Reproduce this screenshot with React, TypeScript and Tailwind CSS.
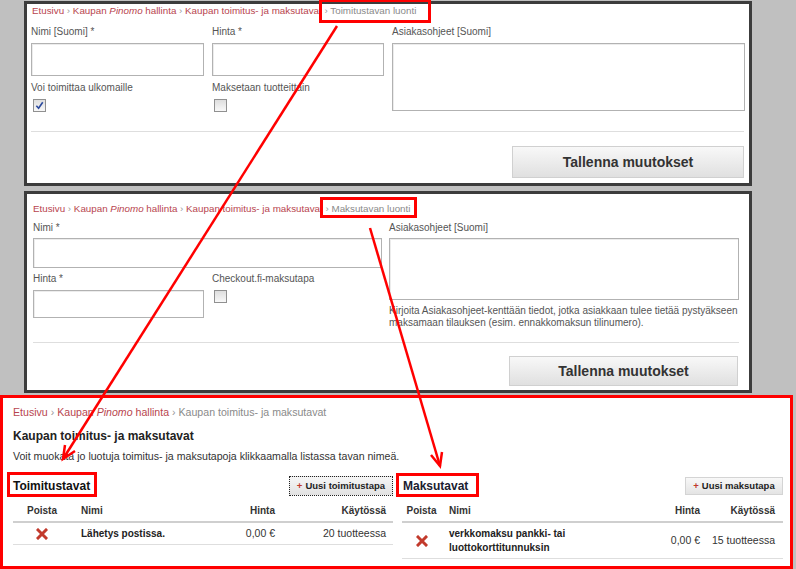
/**
 * Toimitus- ja maksutavat – annotated admin screenshot
 */

function Breadcrumb({ current, className }: { current?: string; className: string }) {
  return (
    <div className={className}>
      <span className="text-[#b8454e]">Etusivu</span>
      <span className="text-[#999]"> › </span>
      <span className="text-[#b8454e]">
        Kaupan <i>Pinomo</i> hallinta
      </span>
      <span className="text-[#999]"> › </span>
      <span className={current ? 'text-[#b8454e]' : 'text-[#8a8a8a]'}>Kaupan toimitus- ja maksutavat</span>
      {current && (
        <>
          <span className="text-[#999]"> › </span>
          <span className="text-[#8a8a8a]">{current}</span>
        </>
      )}
    </div>
  )
}

function Label({ children, className = '' }: { children: React.ReactNode; className?: string }) {
  return <div className={`h-[12px] whitespace-nowrap text-[10px] leading-[12px] text-[#555] ${className}`}>{children}</div>
}

function Checkbox({ checked }: { checked?: boolean }) {
  return (
    <span className="flex h-[13px] w-[13px] items-center justify-center border border-[#909090] bg-linear-to-b from-[#dedede] to-[#f8f8f8]">
      {checked && (
        <svg viewBox="0 0 10 10" className="h-[9px] w-[9px]">
          <path d="M1.5 5.2 L4 8 L8.6 1.4" fill="none" stroke="#2b4a9e" strokeWidth="1.8" />
        </svg>
      )}
    </span>
  )
}

function DeleteIcon() {
  return (
    <svg viewBox="0 0 12 12" className="h-[12px] w-[12px]">
      <path d="M2 2 L10 10 M10 2 L2 10" stroke="#c23a2c" strokeWidth="3" strokeLinecap="square" />
    </svg>
  )
}

const inputCls = 'block w-full border border-[#b2b2b2] bg-white shadow-[inset_1px_1px_0_#ececec]'

function Annotations() {
  return (
    <svg className="pointer-events-none absolute left-0 top-0" width="796" height="569" viewBox="0 0 796 569">
      <g fill="none" stroke="#ff0000" strokeWidth="3">
        <rect x="320.5" y="0.5" width="109" height="21" />
        <rect x="321.5" y="198.5" width="94" height="18" />
        <rect x="8.5" y="473.5" width="87" height="22" />
        <rect x="397.5" y="474.5" width="80" height="21" />
      </g>
      <g fill="none" stroke="#ff0000" strokeWidth="2.5">
        <line x1="337" y1="26" x2="63" y2="459" />
        <polyline points="65,445 63,459 75,451" />
        <line x1="370" y1="228" x2="440" y2="466" />
        <polyline points="431,455 440,466 442,452" />
      </g>
    </svg>
  )
}

export default function App() {
  return (
    <div className="relative h-[569px] w-[796px] overflow-hidden bg-[#c0c0c0] font-['Liberation_Sans',Arial,sans-serif]">
      {/* Toimitustavan luonti */}
      <div className="ml-[24px] mt-[1px] h-[185px] w-[728px] border-[3px] border-[#3c3c3c] bg-white px-[4px]">
        <Breadcrumb
          current="Toimitustavan luonti"
          className="h-[14px] whitespace-nowrap pl-[1px] text-[9.8px] leading-[14px]"
        />
        <div className="mt-[8px] flex gap-[8px]">
          <div className="w-[173px]">
            <Label>Nimi [Suomi] *</Label>
            <input readOnly className={`mt-[5px] h-[33px] ${inputCls}`} />
            <Label className="mt-[6px]">Voi toimittaa ulkomaille</Label>
            <div className="mt-[5px] pl-[2px]">
              <Checkbox checked />
            </div>
          </div>
          <div className="w-[172px]">
            <Label>Hinta *</Label>
            <input readOnly className={`mt-[5px] h-[33px] ${inputCls}`} />
            <Label className="mt-[6px]">Maksetaan tuotteittain</Label>
            <div className="mt-[5px] pl-[2px]">
              <Checkbox />
            </div>
          </div>
          <div className="w-[353px]">
            <Label>Asiakasohjeet [Suomi]</Label>
            <textarea readOnly className={`mt-[5px] h-[68px] resize-none ${inputCls}`} />
          </div>
        </div>
        <div className="mt-[19px] h-px w-[713px] bg-[#dedede]" />
        <div className="mr-[1px] mt-[14px] flex justify-end">
          <button className="h-[32px] w-[232px] border border-[#d0d0d0] bg-linear-to-b from-[#f8f8f8] to-[#e0e0e0] text-[14px] font-bold text-[#333]">
            Tallenna muutokset
          </button>
        </div>
      </div>

      {/* Maksutavan luonti */}
      <div className="ml-[24px] mt-[5px] h-[202px] w-[728px] border-[3px] border-[#3c3c3c] bg-white pl-[6px] pr-[10px] pt-[8px]">
        <Breadcrumb current="Maksutavan luonti" className="h-[14px] whitespace-nowrap text-[9.8px] leading-[14px]" />
        <div className="mt-[6px] flex items-start gap-[7px]">
          <div className="w-[349px]">
            <Label>Nimi *</Label>
            <input readOnly className={`mt-[4px] h-[30px] ${inputCls}`} />
            <div className="mt-[5px] flex gap-[8px]">
              <div className="w-[171px]">
                <Label>Hinta *</Label>
                <input readOnly className={`mt-[5px] h-[28px] ${inputCls}`} />
              </div>
              <div>
                <Label>Checkout.fi-maksutapa</Label>
                <div className="mt-[5px] pl-[2px]">
                  <Checkbox />
                </div>
              </div>
            </div>
          </div>
          <div className="w-[350px]">
            <Label>Asiakasohjeet [Suomi]</Label>
            <textarea readOnly className={`mt-[4px] h-[62px] resize-none ${inputCls}`} />
            <p className="mt-[5px] text-[10px] leading-[12px] text-[#555]">
              Kirjoita Asiakasohjeet-kenttään tiedot, jotka asiakkaan tulee tietää pystyäkseen
              <br />
              maksamaan tilauksen (esim. ennakkomaksun tilinumero).
            </p>
          </div>
        </div>
        <div className="mt-[13px] h-px bg-[#dedede]" />
        <div className="mr-[1px] mt-[13px] flex justify-end">
          <button className="h-[30px] w-[229px] border border-[#d0d0d0] bg-linear-to-b from-[#f8f8f8] to-[#e0e0e0] text-[14px] font-bold text-[#333]">
            Tallenna muutokset
          </button>
        </div>
      </div>

      {/* Kaupan toimitus- ja maksutavat */}
      <div className="mt-[2px] h-[174px] w-[793px] border-[3px] border-[#ff0000] bg-white pl-[10px] pt-[7px]">
        <Breadcrumb className="h-[14px] whitespace-nowrap text-[10.6px] leading-[14px]" />
        <h1 className="mt-[9px] text-[12px] font-bold leading-[16px] text-[#222]">Kaupan toimitus- ja maksutavat</h1>
        <p className="mt-[5px] text-[10.6px] leading-[14px] text-[#333]">
          Voit muokata jo luotuja toimitus- ja maksutapoja klikkaamalla listassa tavan nimeä.
        </p>

        <div className="mt-[12px] flex gap-[9px]">
          {/* Toimitustavat */}
          <div className="w-[380px]">
            <div className="flex h-[22px] items-center justify-between">
              <h2 className="text-[12px] font-bold text-[#111]">Toimitustavat</h2>
              <button className="flex h-[20px] w-[104px] items-center justify-center gap-[3px] border border-dotted border-[#222] bg-linear-to-b from-[#f6f6f6] to-[#e2e2e2] text-[9.5px] font-bold text-[#222]">
                <span className="text-[#c0392b]">+</span>Uusi toimitustapa
              </button>
            </div>
            <div className="mt-[2px] grid h-[24px] grid-cols-[58px_150px_60px_112px] items-center border-b-2 border-[#cfcfcf] text-[10px] font-bold text-[#333]">
              <div className="text-center">Poista</div>
              <div className="pl-[10px]">Nimi</div>
              <div className="pr-[6px] text-right">Hinta</div>
              <div className="pr-[7px] text-right">Käytössä</div>
            </div>
            <div className="grid h-[22px] grid-cols-[58px_150px_60px_112px] items-center border-b border-[#dedede] text-[10.5px] text-[#333]">
              <div className="flex justify-center">
                <DeleteIcon />
              </div>
              <div className="pl-[10px] text-[10px] font-bold text-[#222]">Lähetys postissa.</div>
              <div className="pr-[6px] text-right">0,00 €</div>
              <div className="pr-[7px] text-right">20 tuotteessa</div>
            </div>
          </div>

          {/* Maksutavat */}
          <div className="w-[381px]">
            <div className="flex h-[22px] items-center justify-between">
              <h2 className="pl-[1px] text-[12px] font-bold text-[#1a2030]">Maksutavat</h2>
              <button className="flex h-[18px] w-[98px] items-center justify-center gap-[3px] border border-[#d4d4d4] bg-linear-to-b from-[#f8f8f8] to-[#e4e4e4] text-[9.5px] font-bold text-[#222]">
                <span className="text-[#c0392b]">+</span>Uusi maksutapa
              </button>
            </div>
            <div className="mt-[2px] grid h-[24px] grid-cols-[39px_205px_60px_77px] items-center border-b-2 border-[#cfcfcf] text-[10px] font-bold text-[#333]">
              <div className="text-center">Poista</div>
              <div className="pl-[8px]">Nimi</div>
              <div className="pr-[6px] text-right">Hinta</div>
              <div className="pr-[8px] text-right">Käytössä</div>
            </div>
            <div className="grid grid-cols-[39px_205px_60px_77px] items-center border-b border-[#dedede] pb-[3px] pt-[4px] text-[10.5px] text-[#333]">
              <div className="flex justify-center">
                <DeleteIcon />
              </div>
              <div className="w-[140px] pl-[8px] text-[10px] font-bold leading-[14px] text-[#222]">
                verkkomaksu pankki- tai luottokorttitunnuksin
              </div>
              <div className="pr-[6px] text-right">0,00 €</div>
              <div className="pr-[8px] text-right">15 tuotteessa</div>
            </div>
          </div>
        </div>
      </div>

      <Annotations />
    </div>
  )
}
